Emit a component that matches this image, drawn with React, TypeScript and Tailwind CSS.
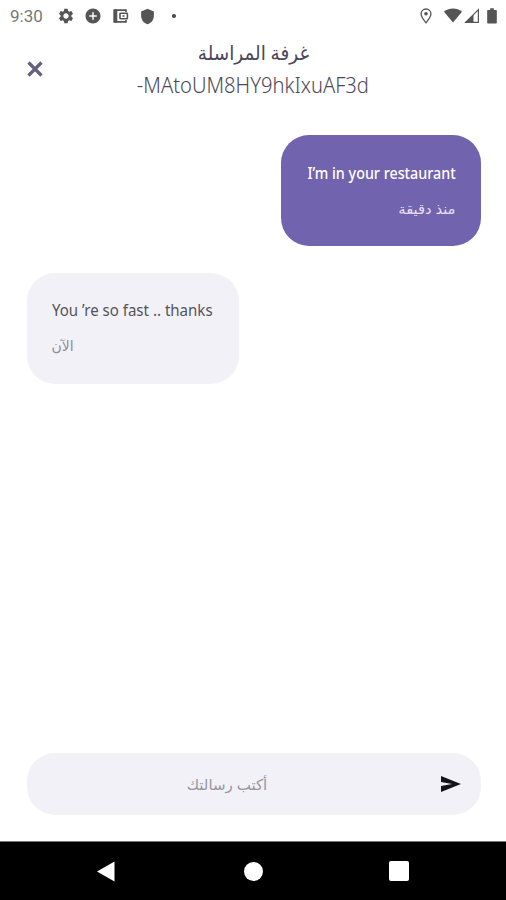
import { MdSettings, MdAddCircle, MdShield } from 'react-icons/md';

const messages = [
  { id: 1, text: 'I’m in your restaurant', time: 'منذ دقيقة', mine: true },
  { id: 2, text: 'You ’re so fast .. thanks', time: 'الآن', mine: false },
];

function StatusBar() {
  return (
    <div className="h-8 shrink-0 flex items-center text-[#555555] pl-[10px] pr-[9px]">
      <span className="font-['Roboto',sans-serif] text-[17px] leading-8 w-[47px] text-[#777777]">9:30</span>
      <div className="flex items-center gap-[9px]">
        <MdSettings className="w-[18px] h-[18px]" />
        <MdAddCircle className="w-[18px] h-[18px]" />
        <svg className="w-[18px] h-[18px]" viewBox="0 0 18 18" fill="none" stroke="currentColor">
          <path d="M15 5V3.200H4V14.800H15V13" strokeWidth="1.700" />
          <path d="M2.300 2.400H6.300V15.600H2.300Z" fill="currentColor" stroke="none" />
          <rect x="9" y="6.200" width="7.400" height="5.600" rx="0.500" strokeWidth="1.600" />
          <path d="M11.500 8.200H13.500V9.800H11.500Z" fill="currentColor" stroke="none" />
        </svg>
        <MdShield className="w-[17px] h-[17px] ml-px" />
      </div>
      <span className="ml-[16px] w-1 h-1 rounded-full bg-[#444444]" />

      <div className="ml-auto flex items-center">
        <svg className="w-3 h-4 mr-[12px]" viewBox="0 0 12 16" fill="none" stroke="currentColor" strokeWidth="1.3">
          <path d="M6 1C3.2 1 1.100 3 1.100 5.800 1.100 9 6 14.800 6 14.800S10.900 9 10.900 5.800C10.900 3 8.800 1 6 1Z" />
          <circle cx="6" cy="5.800" r="1.800" fill="currentColor" stroke="none" />
        </svg>
        <svg className="w-[18px] h-4 mr-[2px]" viewBox="0 0 18 16" fill="currentColor">
          <path d="M9 14.500 0 3.800C5.200-.5 12.800-.5 18 3.800Z" />
        </svg>
        <svg className="w-4 h-4 mr-[7px]" viewBox="0 0 16 16">
          <path d="M14.400 1.600V14.400H1.600Z" fill="none" stroke="currentColor" strokeWidth="1.200" />
          <path d="M9.500 6.500V14.500H1Z" fill="currentColor" />
        </svg>
        <svg className="w-[10px] h-4" viewBox="0 0 11 17" fill="currentColor">
          <path d="M3.500 0h4v2H10q.8 0 .8.8V16q0 .8-.8.8H1q-.8 0-.8-.8V2.800Q.2 2 1 2h2.500Z" />
        </svg>
      </div>
    </div>
  );
}

function Header() {
  return (
    <header className="h-[70px] shrink-0 flex items-start pt-[5px] text-[#4b4758]">
      <button className="w-[70px] h-16 flex items-center justify-center" aria-label="Close">
        <svg className="w-4 h-4" viewBox="0 0 16 16" fill="none" stroke="#655d82" strokeWidth="3.200">
          <path d="M1.500 1.500 14.500 14.500M14.500 1.500 1.500 14.500" />
        </svg>
      </button>
      <h1 className="flex-1 flex flex-col items-center text-[21px] leading-8 whitespace-nowrap mr-[70px]">
        <span dir="rtl" className="text-[20px] scale-x-[0.92]">غرفة المراسلة</span>
        <span className="font-light scale-x-[0.96]">-MAtoUM8HY9hkIxuAF3d</span>
      </h1>
    </header>
  );
}

export default function App() {
  return (
    <div className="w-full h-screen flex flex-col bg-white overflow-hidden font-['Noto_Sans','DejaVu_Sans',sans-serif]">
      <StatusBar />
      <Header />

      {/* Messages */}
      <main className="flex-1 flex flex-col gap-[27px] pl-[26.5px] pr-[25.5px] pt-[32.5px]">
        {messages.map((message) => (
          <div
            key={message.id}
            className={
              message.mine
                ? 'self-end w-[200px] h-[111px] rounded-[28px] bg-[#7163ad] text-white px-[25px] pt-[26px] flex flex-col items-end'
                : 'self-start w-[212px] h-[111px] rounded-[28px] bg-[#f2f1f8] text-[#555459] px-[25px] pt-[25px] flex flex-col items-start'
            }
          >
            <p
              className={
                message.mine
                  ? 'text-[16px] font-medium leading-6 whitespace-nowrap origin-right scale-x-[0.895]'
                  : 'text-[16px] leading-6 whitespace-nowrap origin-left scale-x-[0.94]'
              }
            >
              {message.text}
            </p>
            <p
              dir="rtl"
              className={
                message.mine
                  ? 'mt-3 text-[14px] leading-6 text-[#e6e1f5] whitespace-nowrap origin-right scale-x-[1.05]'
                  : 'mt-3 text-[14px] leading-6 text-[#8f8b9c] whitespace-nowrap origin-left'
              }
            >
              {message.time}
            </p>
          </div>
        ))}
      </main>

      {/* Message input */}
      <div className="h-[62px] shrink-0 ml-[26.5px] mr-[25.5px] mb-[26px] rounded-[28px] bg-[#f2f1f8] flex items-center pr-[20px]">
        <span dir="rtl" className="flex-1 text-center text-[15px] text-[#98969e] pr-[13px]">أكتب رسالتك</span>
        <button aria-label="Send">
          <svg className="w-5 h-[18px]" viewBox="0 0 20 18" fill="#151515">
            <path d="M0 1 20 9 0 17V11L11 9 0 7Z" />
          </svg>
        </button>
      </div>

      {/* Android navigation */}
      <nav className="h-[59px] shrink-0 bg-black border-t border-[#777777] flex items-center justify-between pl-[96px] pr-[97px]">
        <svg className="w-[19px] h-[21px]" viewBox="0 0 19 21" fill="white">
          <path d="M1 10.500 18.500.5V20.500Z" />
        </svg>
        <span className="w-[19px] h-[19px] rounded-full bg-white ml-[2px]" />
        <span className="w-5 h-5 rounded-[2px] bg-white" />
      </nav>
    </div>
  );
}
